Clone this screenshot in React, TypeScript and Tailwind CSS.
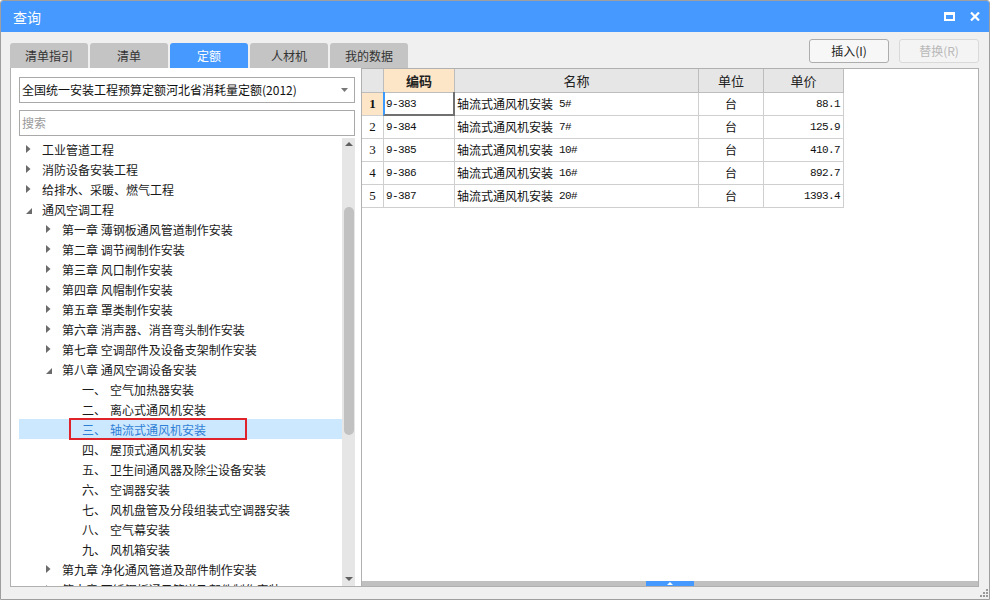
import React from "react";

type Node = { l: number; t: string; s: "c" | "e" | "n"; n?: string; sel?: boolean };

const tree: Node[] = [
  { l: 0, t: "工业管道工程", s: "c" },
  { l: 0, t: "消防设备安装工程", s: "c" },
  { l: 0, t: "给排水、采暖、燃气工程", s: "c" },
  { l: 0, t: "通风空调工程", s: "e" },
  { l: 1, t: "第一章 薄钢板通风管道制作安装", s: "c" },
  { l: 1, t: "第二章 调节阀制作安装", s: "c" },
  { l: 1, t: "第三章 风口制作安装", s: "c" },
  { l: 1, t: "第四章 风帽制作安装", s: "c" },
  { l: 1, t: "第五章 罩类制作安装", s: "c" },
  { l: 1, t: "第六章 消声器、消音弯头制作安装", s: "c" },
  { l: 1, t: "第七章 空调部件及设备支架制作安装", s: "c" },
  { l: 1, t: "第八章 通风空调设备安装", s: "e" },
  { l: 2, n: "一、", t: "空气加热器安装", s: "n" },
  { l: 2, n: "二、", t: "离心式通风机安装", s: "n" },
  { l: 2, n: "三、", t: "轴流式通风机安装", s: "n", sel: true },
  { l: 2, n: "四、", t: "屋顶式通风机安装", s: "n" },
  { l: 2, n: "五、", t: "卫生间通风器及除尘设备安装", s: "n" },
  { l: 2, n: "六、", t: "空调器安装", s: "n" },
  { l: 2, n: "七、", t: "风机盘管及分段组装式空调器安装", s: "n" },
  { l: 2, n: "八、", t: "空气幕安装", s: "n" },
  { l: 2, n: "九、", t: "风机箱安装", s: "n" },
  { l: 1, t: "第九章 净化通风管道及部件制作安装", s: "c" },
  { l: 1, t: "第十章 不锈钢板通风管道及部件制作安装", s: "c" },
];

const rows = [
  { code: "9-383", name: "轴流式通风机安装", sz: "5#", unit: "台", price: "88.1" },
  { code: "9-384", name: "轴流式通风机安装", sz: "7#", unit: "台", price: "125.9" },
  { code: "9-385", name: "轴流式通风机安装", sz: "10#", unit: "台", price: "410.7" },
  { code: "9-386", name: "轴流式通风机安装", sz: "16#", unit: "台", price: "892.7" },
  { code: "9-387", name: "轴流式通风机安装", sz: "20#", unit: "台", price: "1393.4" },
];

const tabs = ["清单指引", "清单", "定额", "人材机", "我的数据"];

function Caret({ s }: { s: Node["s"] }) {
  if (s === "c")
    return (
      <svg width="5" height="8" viewBox="0 0 5 8">
        <path d="M0 0 L4.5 4 L0 8 Z" fill="#6b6b6b" />
      </svg>
    );
  if (s === "e")
    return (
      <svg width="6" height="6" viewBox="0 0 6 6" className="mt-[3px]">
        <path d="M6 0 L6 6 L0 6 Z" fill="#6b6b6b" />
      </svg>
    );
  return null;
}

function TreeRow({ node }: { node: Node }) {
  const pl = node.l === 0 ? "pl-[7px]" : node.l === 1 ? "pl-[27px]" : "pl-[47px]";
  return (
    <div
      className={`relative flex h-[20px] shrink-0 items-center ${pl} ${
        node.sel ? "bg-[#cce8ff] text-[#2f7fd6]" : "text-[#1a1a1a]"
      }`}
    >
      <div className="flex w-[16px] shrink-0 items-center">
        <Caret s={node.s} />
      </div>
      {node.n && <span className="w-[28px] shrink-0 whitespace-nowrap pt-[1px]">{node.n}</span>}
      <span className="whitespace-nowrap pt-[1px]">{node.t}</span>
      {node.sel && (
        <div className="absolute left-[50px] top-[-1px] h-[22px] w-[178px] border-2 border-[#e0232b]" />
      )}
    </div>
  );
}

const mono = "font-['Liberation_Mono',monospace] text-[11px] tracking-[-0.6px]";

export default function App() {
  return (
    <div className="flex h-[600px] w-[990px] flex-col overflow-hidden rounded-t-[3px] border border-[#9e9e9e] bg-[#f0f0f0] font-['Noto_Sans_CJK_SC',sans-serif] text-[12px] leading-[20px]">
      {/* Title bar */}
      <div className="flex h-[31px] shrink-0 items-center justify-between bg-[#4599ff] pl-[12px] pr-[9px] text-white">
        <span className="text-[14px]">查询</span>
        <div className="flex items-center gap-[15px]">
          <svg width="11" height="9" viewBox="0 0 11 9">
            <rect x="1" y="1" width="9" height="7" fill="none" stroke="white" strokeWidth="2" />
            <rect x="0" y="0" width="11" height="3" fill="white" />
          </svg>
          <svg width="10" height="9" viewBox="0 0 10 9">
            <path d="M1 0.5 L9 8.5 M9 0.5 L1 8.5" stroke="white" strokeWidth="2.2" />
          </svg>
        </div>
      </div>

      {/* tabs + buttons */}
      <div className="flex h-[36px] shrink-0 justify-between pl-[9px] pr-[10px]">
        <div className="mt-[11px] flex gap-[2px]">
          {tabs.map((t, i) => (
            <div
              key={t}
              className={`flex h-[25px] w-[78px] items-center justify-center rounded-t-[3px] ${
                i === 2 ? "bg-[#4599ff] text-white" : "bg-[#c4c4c4] text-[#333]"
              }`}
            >
              {t}
            </div>
          ))}
        </div>
        <div className="mt-[7px] flex gap-[10px]">
          <div className="flex h-[24px] w-[80px] items-center justify-center rounded-[3px] border border-[#adadad] bg-[#f7f7f7] text-[#222]">
            插入(I)
          </div>
          <div className="flex h-[24px] w-[80px] items-center justify-center rounded-[3px] border border-[#d9d9d9] bg-[#f4f4f4] text-[#b8b8b8]">
            替换(R)
          </div>
        </div>
      </div>

      {/* panels */}
      <div className="flex h-[519px] shrink-0 pl-[9px] pr-[10px]">
        {/* left panel */}
        <div className="flex w-[351px] shrink-0 flex-col border-b border-l border-[#b0b0b0] bg-white pb-0">
          <div className="ml-[8px] mt-[9px] flex h-[26px] w-[336px] items-center justify-between border border-[#a9a9a9] pl-[2px] pr-[6px] text-[#111]">
            <span className="whitespace-nowrap">全国统一安装工程预算定额河北省消耗量定额(2012)</span>
            <svg width="7" height="4" viewBox="0 0 7 4">
              <path d="M0 0 L7 0 L3.5 4 Z" fill="#777" />
            </svg>
          </div>
          <div className="ml-[8px] mt-[7px] flex h-[26px] w-[336px] items-center border border-[#a9a9a9] pl-[2px] text-[#9a9a9a]">
            搜索
          </div>
          <div className="mt-[2px] flex min-h-0 flex-1 pl-[8px]">
            <div className="flex w-[323px] flex-col overflow-hidden pt-[1px]">
              {tree.map((n, i) => (
                <TreeRow key={i} node={n} />
              ))}
            </div>
            <div className="flex w-[13px] flex-col items-center bg-[#e6e6e6]">
              <div className="mt-[4px]">
                <svg width="8" height="4" viewBox="0 0 8 4">
                  <path d="M0 4 L4 0 L8 4 Z" fill="#606060" />
                </svg>
              </div>
              <div className="mt-[61px] h-[228px] w-[10px] rounded-full bg-[#c1c1c1]" />
              <div className="flex-1" />
              <div className="mb-[5px]">
                <svg width="8" height="4" viewBox="0 0 8 4">
                  <path d="M0 0 L8 0 L4 4 Z" fill="#606060" />
                </svg>
              </div>
            </div>
          </div>
        </div>

        {/* right panel */}
        <div className="flex flex-1 flex-col border border-[#b0b0b0] bg-white">
          <div className="flex flex-col">
            {/* header */}
            <div className="flex h-[24px] text-[#222]">
              <div className="w-[22px] border-b border-r border-[#bdbdbd] bg-[#e6e6e6]" />
              <div className="flex w-[71px] items-center justify-center border-b border-r border-[#bdbdbd] bg-[#fde6c8] text-[13px] font-bold">
                编码
              </div>
              <div className="flex w-[244px] items-center justify-center border-b border-r border-[#bdbdbd] bg-[#e6e6e6] text-[13px]">
                名称
              </div>
              <div className="flex w-[65px] items-center justify-center border-b border-r border-[#bdbdbd] bg-[#e6e6e6] text-[13px]">
                单位
              </div>
              <div className="flex w-[80px] items-center justify-center border-b border-r border-[#bdbdbd] bg-[#e6e6e6] text-[13px]">
                单价
              </div>
            </div>
            {rows.map((r, i) => (
              <div key={r.code} className="flex h-[23px] text-[#111]">
                <div
                  className={`flex w-[22px] items-center justify-center border-b border-r border-[#cfcfcf] font-['Liberation_Serif',serif] text-[13px] ${
                    i === 0 ? "bg-[#fde6c8] font-bold" : ""
                  }`}
                >
                  {i + 1}
                </div>
                <div className={`relative flex w-[71px] items-center border-b border-r border-[#cfcfcf] pl-[2px] ${mono}`}>
                  {r.code}
                  {i === 0 && (
                    <div className="absolute inset-[-1px] border-b-2 border-l-2 border-r-2 border-[#707070] border-l-[#3d9bff]" />
                  )}
                </div>
                <div className="flex w-[244px] items-center whitespace-nowrap border-b border-r border-[#cfcfcf] pl-[2px]">
                  <span>{r.name}</span>
                  <span className={`${mono} ml-[6px]`}>{r.sz}</span>
                </div>
                <div className="flex w-[65px] items-center justify-center border-b border-r border-[#cfcfcf]">
                  {r.unit}
                </div>
                <div className={`flex w-[80px] items-center justify-end border-b border-r border-[#cfcfcf] pr-[3px] ${mono}`}>
                  {r.price}
                </div>
              </div>
            ))}
          </div>
          <div className="flex-1" />
          <div className="flex h-[5px] bg-[#c0c0c0]">
            <div className="w-[284px] shrink-0" />
            <div className="flex w-[48px] shrink-0 items-center justify-center bg-[#4599ff]">
              <svg width="6" height="3" viewBox="0 0 6 3">
                <path d="M0 3 L3 0 L6 3 Z" fill="white" />
              </svg>
            </div>
          </div>
        </div>
      </div>

      {/* bottom status strip */}
      <div className="flex flex-1 items-end justify-end pb-[2px] pr-[1px]">
        <svg width="8" height="8" viewBox="0 0 8 8">
          <rect x="6" y="0" width="2" height="2" fill="#9a9a9a" />
          <rect x="3" y="3" width="2" height="2" fill="#9a9a9a" />
          <rect x="6" y="3" width="2" height="2" fill="#9a9a9a" />
          <rect x="0" y="6" width="2" height="2" fill="#9a9a9a" />
          <rect x="3" y="6" width="2" height="2" fill="#9a9a9a" />
          <rect x="6" y="6" width="2" height="2" fill="#9a9a9a" />
        </svg>
      </div>
    </div>
  );
}
